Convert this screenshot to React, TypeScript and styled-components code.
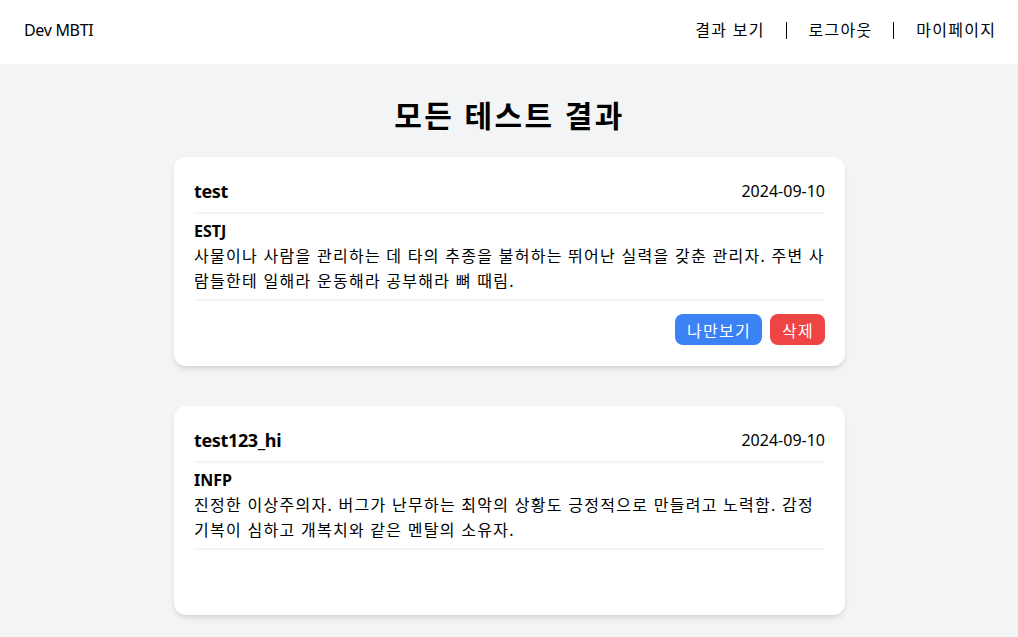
import React from "react";
import styled, { createGlobalStyle } from "styled-components";

const GlobalStyle = createGlobalStyle`
  * { box-sizing: border-box; }
  html, body { margin: 0; padding: 0; }
  body {
    background: #f3f4f6;
    font-family: "Noto Sans", "Noto Sans CJK KR", sans-serif;
    color: #000;
  }
`;

const Header = styled.header`
  height: 64px;
  background: #ffffff;
  display: flex;
  align-items: center;
  justify-content: space-between;
  padding: 0 23px 4px 24px;
`;

const Logo = styled.div`
  font-size: 16px;
  line-height: 24px;
  letter-spacing: -0.02em;
`;

const Nav = styled.nav`
  display: flex;
  align-items: center;
`;

const NavLink = styled.a`
  font-size: 16px;
  line-height: 24px;
  letter-spacing: 0.08em;
  margin-right: -0.08em;
  color: #000;
  text-decoration: none;
  cursor: pointer;
`;

const Separator = styled.span`
  width: 1px;
  height: 17px;
  background: #000;
  margin: 0 22px;
`;

const Main = styled.main`
  width: 672px;
  margin: 0 auto;
  padding: 34px 0 40px 1px;
  display: flex;
  flex-direction: column;
  gap: 40px;
`;

const Title = styled.h1`
  margin: 0 0 -17px;
  font-size: 30px;
  line-height: 36px;
  font-weight: 700;
  letter-spacing: 0.08em;
  text-align: center;
`;

const Card = styled.section`
  background: #ffffff;
  border-radius: 12px;
  padding: 20px 20px 21px;
  box-shadow: 0 4px 6px -1px rgba(0, 0, 0, 0.1), 0 2px 4px -2px rgba(0, 0, 0, 0.1);
`;

const CardHeader = styled.div`
  display: flex;
  justify-content: space-between;
  align-items: center;
  padding-bottom: 7px;
  border-bottom: 2px solid #f3f4f6;
`;

const UserName = styled.h3`
  margin: 0;
  font-size: 18px;
  line-height: 28px;
  font-weight: 700;
  letter-spacing: -0.02em;
`;

const DateText = styled.span`
  font-size: 16px;
  line-height: 28px;
`;

const CardBody = styled.div`
  padding: 5px 0 5px;
  border-bottom: 2px solid #f3f4f6;
`;

const TypeName = styled.p`
  margin: 0;
  font-size: 16px;
  line-height: 24px;
  font-weight: 700;
`;

const Description = styled.p`
  margin: 1px 0 0;
  font-size: 16px;
  line-height: 25px;
  letter-spacing: 0.08em;
`;

const Actions = styled.div`
  display: flex;
  justify-content: flex-end;
  gap: 8px;
  margin-top: 13px;
  height: 31px;
`;

const ActionButton = styled.button<{ $variant: "blue" | "red" }>`
  border: none;
  border-radius: 8px;
  padding: 0 11px 0 12px;
  height: 31px;
  font-family: inherit;
  font-size: 16px;
  letter-spacing: 0.08em;
  color: #ffffff;
  cursor: pointer;
  background: ${(p) => (p.$variant === "blue" ? "#3b82f6" : "#ef4444")};
`;

type Result = {
  user: string;
  date: string;
  type: string;
  desc: string;
  mine: boolean;
};

const results: Result[] = [
  {
    user: "test",
    date: "2024-09-10",
    type: "ESTJ",
    desc: "사물이나 사람을 관리하는 데 타의 추종을 불허하는 뛰어난 실력을 갖춘 관리자. 주변 사람들한테 일해라 운동해라 공부해라 뼈 때림.",
    mine: true,
  },
  {
    user: "test123_hi",
    date: "2024-09-10",
    type: "INFP",
    desc: "진정한 이상주의자. 버그가 난무하는 최악의 상황도 긍정적으로 만들려고 노력함. 감정 기복이 심하고 개복치와 같은 멘탈의 소유자.",
    mine: false,
  },
];

export default function App() {
  return (
    <>
      <GlobalStyle />
      <Header>
        <Logo>Dev MBTI</Logo>
        <Nav>
          <NavLink>결과 보기</NavLink>
          <Separator />
          <NavLink>로그아웃</NavLink>
          <Separator />
          <NavLink>마이페이지</NavLink>
        </Nav>
      </Header>
      <Main>
        <Title>모든 테스트 결과</Title>
        {results.map((r) => (
          <Card key={r.user}>
            <CardHeader>
              <UserName>{r.user}</UserName>
              <DateText>{r.date}</DateText>
            </CardHeader>
            <CardBody>
              <TypeName>{r.type}</TypeName>
              <Description>{r.desc}</Description>
            </CardBody>
            <Actions>
              {r.mine && (
                <>
                  <ActionButton $variant="blue">나만보기</ActionButton>
                  <ActionButton $variant="red">삭제</ActionButton>
                </>
              )}
            </Actions>
          </Card>
        ))}
      </Main>
    </>
  );
}
